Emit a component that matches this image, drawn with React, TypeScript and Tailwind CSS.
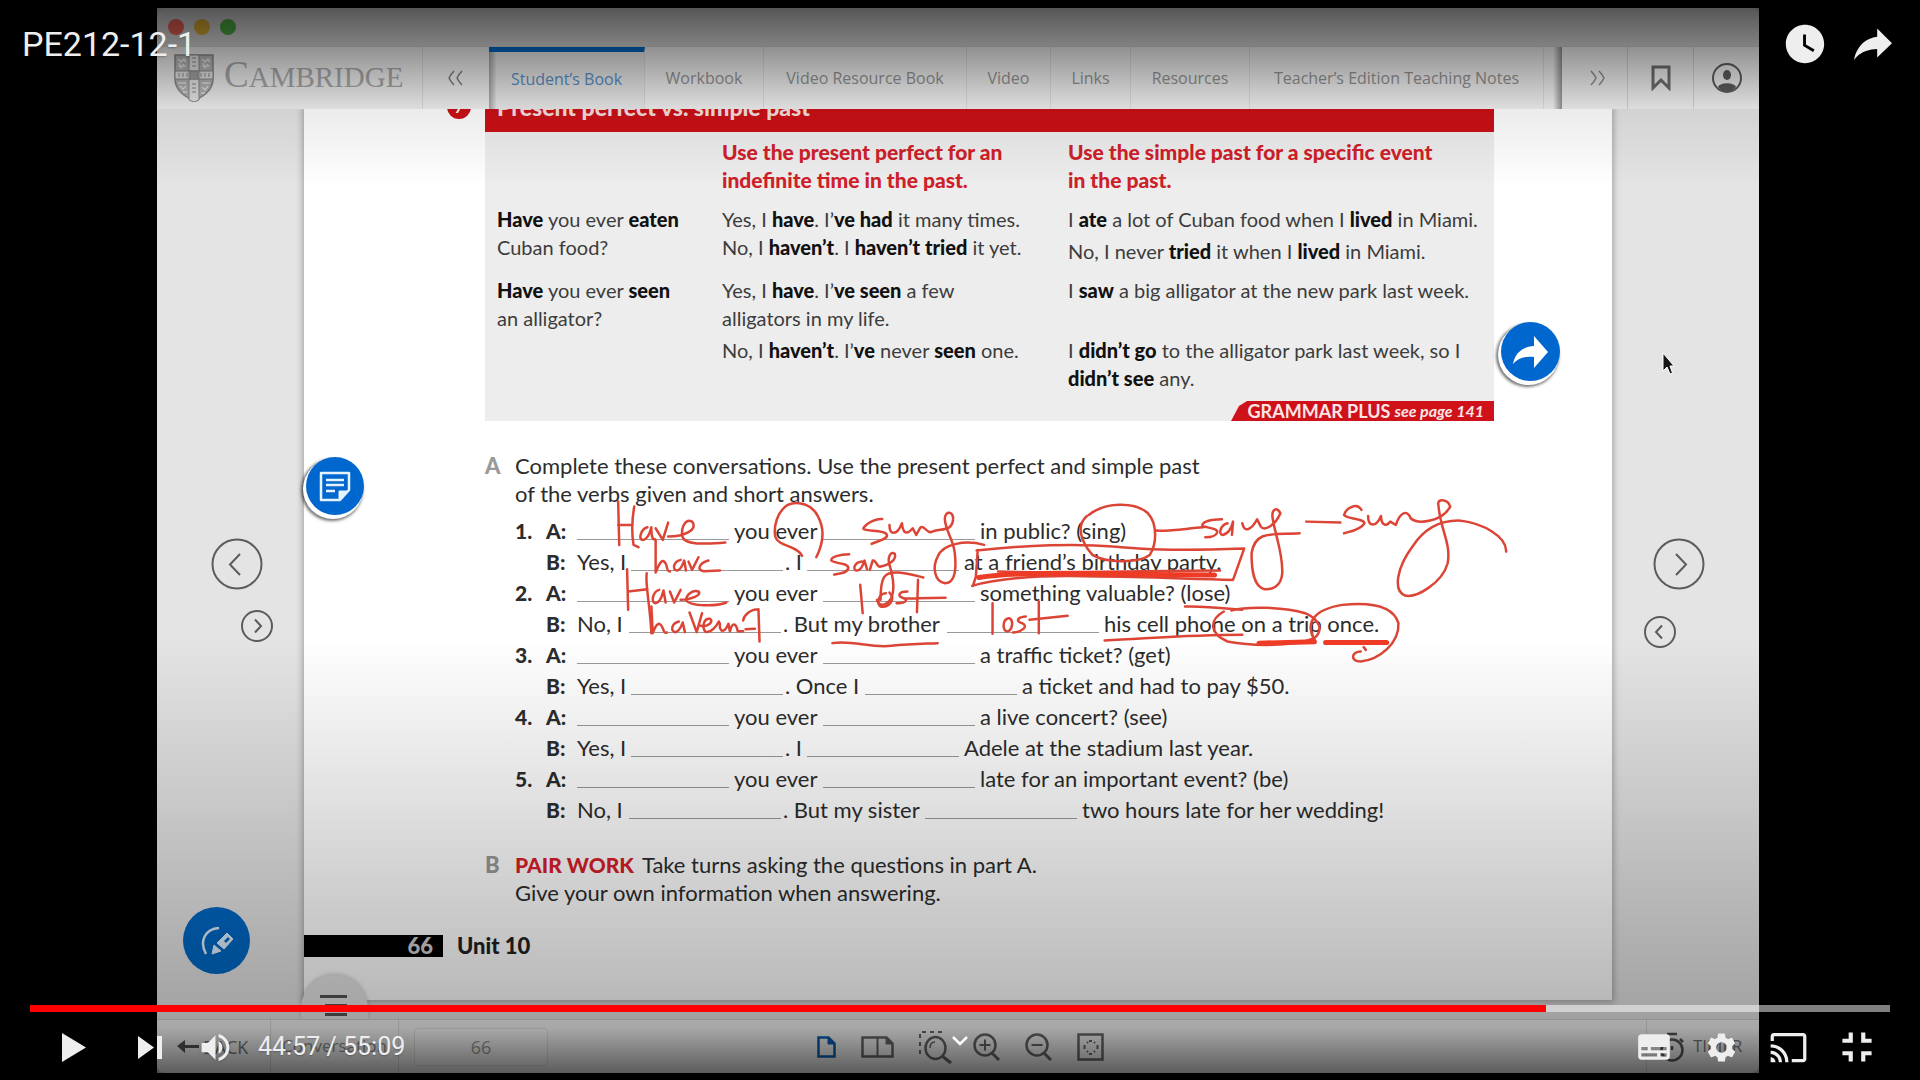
import React from "react";
import {
  MdCast,
  MdFullscreenExit,
  MdSettings,
  MdSubtitles,
  MdVolumeUp,
  MdWatchLater,
} from "react-icons/md";

const tabs = [
  { label: "Workbook", width: "w-[119px]" },
  { label: "Video Resource Book", width: "w-[203px]" },
  { label: "Video", width: "w-[84px]" },
  { label: "Links", width: "w-20" },
  { label: "Resources", width: "w-[119px]" },
  { label: "Teacher’s Edition Teaching Notes", width: "w-[294px]" },
];

type Part = { text?: string; width?: string };
type Line = { number?: string; speaker: string; parts: Part[] };

const blank: Part = {};

const lines: Line[] = [
  { number: "1.", speaker: "A:", parts: [blank, { text: "you ever", width: "w-[94px]" }, blank, { text: "in public? (sing)" }] },
  { speaker: "B:", parts: [{ text: "Yes, I", width: "w-[54px]" }, blank, { text: ". I", width: "w-[24px]" }, blank, { text: "at a friend’s birthday party." }] },
  { number: "2.", speaker: "A:", parts: [blank, { text: "you ever", width: "w-[94px]" }, blank, { text: "something valuable? (lose)" }] },
  { speaker: "B:", parts: [{ text: "No, I", width: "w-[52px]" }, blank, { text: ". But my brother", width: "w-[166px]" }, blank, { text: "his cell phone on a trip once." }] },
  { number: "3.", speaker: "A:", parts: [blank, { text: "you ever", width: "w-[94px]" }, blank, { text: "a traffic ticket? (get)" }] },
  { speaker: "B:", parts: [{ text: "Yes, I", width: "w-[54px]" }, blank, { text: ". Once I", width: "w-[82px]" }, blank, { text: "a ticket and had to pay $50." }] },
  { number: "4.", speaker: "A:", parts: [blank, { text: "you ever", width: "w-[94px]" }, blank, { text: "a live concert? (see)" }] },
  { speaker: "B:", parts: [{ text: "Yes, I", width: "w-[54px]" }, blank, { text: ". I", width: "w-[24px]" }, blank, { text: "Adele at the stadium last year." }] },
  { number: "5.", speaker: "A:", parts: [blank, { text: "you ever", width: "w-[94px]" }, blank, { text: "late for an important event? (be)" }] },
  { speaker: "B:", parts: [{ text: "No, I", width: "w-[52px]" }, blank, { text: ". But my sister", width: "w-[144px]" }, blank, { text: "two hours late for her wedding!" }] },
];

function TitleBar() {
  return (
    <div className="flex h-[38px] shrink-0 items-center gap-[10px] rounded-t-lg bg-[#d8d8d8] pl-[11px]">
      <span className="size-4 rounded-full bg-[#f0625a]" />
      <span className="size-4 rounded-full bg-[#dfae35]" />
      <span className="size-4 rounded-full bg-[#4fae42]" />
    </div>
  );
}

function Shield() {
  return (
    <svg className="h-12 w-10 shrink-0" viewBox="0 0 40 48" fill="none" stroke="#8b8b8b">
      <path d="M1 1h38v24c0 11-9 17-19 22C10 42 1 36 1 25z" fill="#b5b5b5" strokeWidth="1.5" />
      <path d="M15 1h10v45l-5 2-5-2zM1 17h38v8H1z" fill="#e6e6e6" strokeWidth="1" />
      <rect x="16" y="17" width="8" height="8" fill="#a5a5a5" />
      <path d="M4 5l3 3 3-3 2 3M4 12h8M5 9l2 5 3-4M28 5l3 3 3-3 2 3M28 12h8M29 9l2 5 3-4M4 29h8M6 32l3 3 3-3M9 38h4M28 29h8M28 33l3 3 3-4M27 39h4" stroke="#e2e2e2" strokeWidth="1.5" />
      <path d="M5 19v4M9 19v4M13 19v4M27 19v4M31 19v4M35 19v4M18 4h4M18 8h4M18 12h4M18 30h4M18 34h4M18 38h4" strokeWidth="1" />
    </svg>
  );
}

function Nav() {
  return (
    <nav className="flex h-[63px] shrink-0 border-t border-[#cfcfcf] bg-[#efefef] font-['Open_Sans',sans-serif] text-base text-[#929292]">
      <a href="#home" className="flex w-[266px] shrink-0 items-center gap-[10px] border-r border-[#d9d9d9] pl-[17px] text-[#a8a8a8]">
        <Shield />
        <span className="pb-1 font-['Liberation_Serif',serif] text-[29px] leading-8">
          <span className="text-[37px]">C</span>AMBRIDGE
        </span>
      </a>
      <button aria-label="Scroll tabs left" className="flex w-[66px] shrink-0 items-center justify-center">
        <svg className="h-4 w-4" viewBox="0 0 16 16" fill="none" stroke="#7b7b7b" strokeWidth="1.5">
          <path d="M6 1Q3 4 1 8Q3 12 6 15M14 1Q11 4 9 8Q11 12 14 15" />
        </svg>
      </button>
      <button className="flex w-[156px] shrink-0 items-center justify-center border-t-[5px] border-r border-t-[#0069c8] border-r-[#dcdcdc] bg-gradient-to-r from-[#a4a4a4] to-[#e9e9e9] to-5% pb-1 text-[#5a8fc6]">
        Student’s Book
      </button>
      {tabs.map((t) => (
        <button key={t.label} className={`${t.width} shrink-0 border-r border-[#dcdcdc] whitespace-nowrap`}>
          {t.label}
        </button>
      ))}
      <div className="min-w-0 flex-1 bg-gradient-to-r from-[#efefef] from-50% to-[#909090]" />
      <button aria-label="Scroll tabs right" className="flex w-[66px] shrink-0 items-center justify-center border-r border-[#d2d2d2] pl-1">
        <svg className="h-4 w-4" viewBox="0 0 16 16" fill="none" stroke="#8b8b8b" strokeWidth="1.5">
          <path d="M2 1Q5 4 7 8Q5 12 2 15M10 1Q13 4 15 8Q13 12 10 15" />
        </svg>
      </button>
      <button aria-label="Bookmark" className="flex w-[66px] shrink-0 items-center justify-center border-r border-[#d2d2d2]">
        <svg className="h-[26px] w-5" viewBox="0 0 20 26" fill="none" stroke="#6e6e6e" strokeWidth="3">
          <path d="M2 2h16v21l-8-8-8 8z" />
        </svg>
      </button>
      <button aria-label="Account" className="flex w-[65px] shrink-0 items-center justify-center">
        <svg className="size-8" viewBox="0 0 32 32" fill="none" stroke="#5c5c5c">
          <circle cx="16" cy="16" r="14" strokeWidth="2" />
          <ellipse cx="16" cy="13" rx="4" ry="5" fill="#5c5c5c" stroke="none" />
          <path d="M7 25c2-5 16-5 18 0-4 6-14 6-18 0z" fill="#5c5c5c" stroke="none" />
        </svg>
      </button>
    </nav>
  );
}

function GrammarTable() {
  return (
    <section className="relative ml-[181px] h-[312px] w-[1009px] bg-[#ededed]">
      <span className="absolute -top-[14px] -left-[38px] flex size-6 items-center justify-center rounded-full bg-[#cb1016] font-bold text-white">
        7
      </span>
      <div className="h-[23px] bg-[#cb1016]">
        <h2 className="relative -top-4 inline-block px-3 text-[23px] leading-7 font-black text-[#f6dede]">
          Present perfect vs. simple past
        </h2>
      </div>
      <table className="mt-[6px] ml-3 table-fixed text-left text-[20px] leading-7 text-[#3c3c3c] [&_b]:font-black [&_b]:text-[#111]">
        <colgroup>
          <col className="w-[225px]" />
          <col className="w-[346px]" />
          <col className="w-[426px]" />
        </colgroup>
        <thead>
          <tr className="align-top text-[21px] font-bold text-[#cf2029]">
            <td className="pb-[11px]" />
            <th scope="col" className="pb-[11px] font-black">Use the present perfect for an<br />indefinite time in the past.</th>
            <th scope="col" className="pb-[11px] font-black">Use the simple past for a specific event<br />in the past.</th>
          </tr>
        </thead>
        <tbody>
          <tr className="align-top">
            <td><b>Have</b> you ever <b>eaten</b><br />Cuban food?</td>
            <td>Yes, I <b>have</b>. I’<b>ve had</b> it many times.<br />No, I <b>haven’t</b>. I <b>haven’t tried</b> it yet.</td>
            <td className="pb-[11px]">
              <p className="pb-1">I <b>ate</b> a lot of Cuban food when I <b>lived</b> in Miami.</p>
              <p>No, I never <b>tried</b> it when I <b>lived</b> in Miami.</p>
            </td>
          </tr>
          <tr className="align-top">
            <td><b>Have</b> you ever <b>seen</b><br />an alligator?</td>
            <td className="pb-1">Yes, I <b>have</b>. I’<b>ve seen</b> a few<br />alligators in my life.</td>
            <td>I <b>saw</b> a big alligator at the new park last week.</td>
          </tr>
          <tr className="align-top">
            <td />
            <td>No, I <b>haven’t</b>. I’<b>ve</b> never <b>seen</b> one.</td>
            <td>I <b>didn’t go</b> to the alligator park last week, so I<br /><b>didn’t see</b> any.</td>
          </tr>
        </tbody>
      </table>
      <a href="#page-141" className="absolute right-0 bottom-0 flex h-5 w-[263px] items-center justify-end gap-1 rounded-tl-2xl bg-[#cf1219] pr-[10px] text-lg leading-5 font-bold text-[#fae6e6] [clip-path:polygon(0_100%,8px_5px,16px_0,100%_0,100%_100%)]">
        GRAMMAR PLUS <i className="text-base">see page 141</i>
      </a>
    </section>
  );
}

function partPadding(index: number, text: string) {
  if (index === 0) return "";
  return text.startsWith(".") ? "pl-[2px]" : "pl-[5px]";
}

function Exercises() {
  return (
    <section className="ml-[181px] pt-[31px] text-[22px] text-[#2c2c2c]">
      <div className="flex leading-7">
        <h3 className="w-[30px] text-[22px] font-black text-[#999]">A</h3>
        <p>
          Complete these conversations. Use the present perfect and simple past
          <br />
          of the verbs given and short answers.
        </p>
      </div>
      <ol className="mt-[7px] ml-[30px] leading-[31px]">
        {lines.map((l, i) => (
          <li key={i} className="flex whitespace-nowrap">
            <span className="w-[31px] text-[21px] font-black">{l.number}</span>
            <span className="w-[31px] text-[21px] font-black">{l.speaker}</span>
            {l.parts.map((p, j) =>
              p.text ? (
                <span key={j} className={`${p.width ?? ""} ${partPadding(j, p.text)} shrink-0`}>{p.text}</span>
              ) : (
                <span key={j} className="mb-[6px] w-[152px] shrink-0 border-b border-[#999]" />
              ),
            )}
          </li>
        ))}
      </ol>
      <div className="mt-[26px] flex leading-7">
        <h3 className="w-[30px] text-[22px] font-black text-[#999]">B</h3>
        <p>
          <strong className="mr-2 text-[21px] font-black text-[#d81f2b]">PAIR WORK</strong>
          Take turns asking the questions in part A.
          <br />
          Give your own information when answering.
        </p>
      </div>
    </section>
  );
}

const inkLeft = [
  "M415 185L418 315M415 255L455 255M460 200Q450 260 458 315L472 322",
  "M497 262C478 268 470 300 485 300C497 298 505 275 508 262C508 285 510 300 518 298M520 265L540 300L555 248",
  "M555 290C600 290 640 270 622 245C605 235 590 260 595 290C600 320 680 310 715 308",
  "M970 352C990 310 995 270 975 230C960 195 920 180 890 195C860 215 850 260 855 290C862 320 915 315 930 348",
  "M1155 237C1130 235 1100 260 1102 267C1110 275 1165 270 1168 285C1170 300 1135 305 1125 312",
  "M1175 255C1175 285 1195 290 1210 250C1212 275 1220 290 1240 265L1250 285L1262 262C1275 255 1280 285 1295 275C1320 265 1350 275 1353 240C1355 215 1332 210 1330 235C1330 270 1355 300 1358 340C1362 380 1362 430 1330 430C1300 425 1295 380 1310 350C1325 310 1390 300 1440 315",
  "M520 300L520 398C530 370 540 350 550 375C552 390 555 395 560 395",
  "M590 360C570 365 565 390 580 392C592 390 597 370 600 362L605 392M612 365L622 390L640 352M668 362C640 370 635 392 655 394L700 392",
  "M1062 343C1035 343 1010 352 1012 362C1020 372 1060 368 1060 385C1055 400 1035 402 1020 404",
  "M1098 365C1075 368 1070 392 1085 392C1098 390 1102 370 1105 362L1112 388M1120 390L1128 362C1138 358 1140 385 1150 380C1175 375 1195 360 1190 342C1180 332 1168 350 1175 375C1185 410 1190 450 1180 475C1165 500 1145 500 1140 480M1150 480C1150 410 1160 395 1200 398C1230 400 1250 408 1270 413",
  "M440 388L443 510M443 455L497 448M495 400C490 430 505 500 508 580",
  "M530 450C512 455 505 490 520 490C535 488 540 460 542 452L548 488M560 455L572 488L590 450M590 480C620 480 650 465 640 455C625 448 605 465 605 482C620 500 690 500 718 488",
  "M508 500L512 580C520 555 530 540 540 565C543 578 546 580 552 578M585 545C565 550 560 575 575 577C588 575 593 555 596 548L602 577M615 518L635 577L650 520",
  "M645 558C665 563 685 545 672 537C655 535 648 562 660 576C675 580 690 560 697 545M700 550C698 578 712 582 724 552L728 575C735 545 745 550 750 574L765 574M765 542C768 525 785 508 808 508M772 568L798 567M808 508L811 605",
  "M1093 435L1100 520M1165 460C1145 460 1138 490 1150 500C1170 505 1195 480 1175 458M1225 455C1200 455 1195 470 1215 475C1230 482 1215 492 1195 490M1255 420L1252 517M1215 476L1332 474",
  "M1015 610C1070 600 1120 625 1180 618C1230 612 1260 612 1310 610",
];

const inkRight = [
  "M375 105C420 65 500 65 535 100C560 130 560 190 540 225C510 250 420 250 385 225C350 180 342 135 370 108",
  "M555 152C600 155 640 145 685 142M735 118C705 118 680 125 682 138C700 145 725 145 722 158C718 170 700 172 690 172",
  "M750 130C730 135 725 165 737 165C755 160 762 140 765 125L762 165M790 130C795 160 815 150 830 118L840 140C850 155 880 135 893 100C885 80 868 85 872 115C880 170 900 220 898 280C895 320 870 330 850 328C820 320 815 270 815 220C825 150 870 165 945 160",
  "M963 125L1055 128M1112 90C1100 65 1070 85 1065 105C1075 118 1120 115 1120 130C1110 150 1080 155 1065 160",
  "M1130 108C1130 140 1150 145 1165 108C1165 130 1175 145 1190 125L1205 135C1215 100 1235 85 1245 115C1265 135 1330 125 1352 80C1345 55 1315 55 1320 75C1325 150 1355 190 1345 250C1330 310 1260 355 1230 347C1195 330 1210 260 1250 200C1285 140 1330 120 1380 122C1440 130 1505 170 1503 215",
  "M75 210L70 290L62 318M72 212C200 195 350 190 440 200C500 205 560 215 795 206L765 300C600 295 500 290 400 290C250 285 130 295 60 318",
  "M130 275C300 282 500 272 730 272",
  "M635 380C690 378 740 385 790 390M740 395C700 420 700 460 750 485C820 500 930 500 985 475C1010 450 1000 420 960 400C900 380 800 380 760 392",
  "M985 480C960 430 980 390 1060 375C1150 365 1200 385 1212 430C1215 490 1160 540 1110 545C1080 545 1085 515 1110 515M1118 502L1124 510",
  "M418 482C550 475 650 465 790 465",
  "M115 370L115 462M158 415C140 420 142 455 155 455C170 450 172 420 160 415M205 410C180 412 178 425 195 430C215 440 190 458 170 458M240 365L240 460M215 420L318 408",
];

const inkThick = ["M78 293C200 270 450 285 715 285", "M835 490L985 486M1015 488L1180 488"];

function Handwriting() {
  return (
    <svg
      className="pointer-events-none absolute top-0 left-0 h-[891px] w-[1308px]"
      viewBox="304 109 1308 891"
      fill="none"
      stroke="#dc4536"
      strokeWidth="2.5"
      strokeLinecap="round"
      strokeLinejoin="round"
    >
      <g transform="translate(470 440) scale(0.357 0.333)">
        {inkLeft.map((d) => <path key={d} d={d} vectorEffect="non-scaling-stroke" />)}
      </g>
      <g transform="translate(950 480) scale(0.37 0.333)">
        {inkRight.map((d) => <path key={d} d={d} vectorEffect="non-scaling-stroke" />)}
        {inkThick.map((d) => <path key={d} d={d} strokeWidth="5" stroke="#ee3b26" vectorEffect="non-scaling-stroke" />)}
      </g>
    </svg>
  );
}

function RoundArrow({ label, dir, big }: { label: string; dir: "left" | "right"; big?: boolean }) {
  return (
    <button aria-label={label} className={big ? "size-[52px]" : "size-8"}>
      <svg className="size-full" viewBox={big ? "0 0 52 52" : "0 0 32 32"} fill="none" stroke="#5c5c5c" strokeWidth="2">
        {big ? (
          <>
            <circle cx="26" cy="26" r="24.5" />
            <path d={dir === "left" ? "M29 16L19 26.500L29 37" : "M23 16L33 26.500L23 37"} />
          </>
        ) : (
          <>
            <circle cx="16" cy="16" r="15" />
            <path d={dir === "left" ? "M18 9.500L12 16L18 22.500" : "M14 9.500L20 16L14 22.500"} />
          </>
        )}
      </svg>
    </button>
  );
}

function BookPage() {
  return (
    <article className="relative h-[891px] min-w-0 flex-1 bg-white font-[Lato,sans-serif] shadow-[0_0_6px_2px_rgba(0,0,0,0.25)]">
      <GrammarTable />
      <Exercises />
      <footer className="mt-[28px] flex items-center text-[22px] leading-[22px] font-black text-[#222]">
        <span className="w-[139px] bg-black pr-[10px] text-right text-[#d0d0d0]">66</span>
        <span className="ml-[14px]">Unit 10</span>
      </footer>
      <Handwriting />
      <button aria-label="Note" className="absolute top-[348px] left-[2px] flex size-[58px] items-center justify-center rounded-full bg-[#0067cf] shadow-[-2px_3px_0_1px_#fff,-3px_4px_3px_2px_rgba(0,0,0,0.55)]">
        <svg className="size-8" viewBox="0 0 32 32" fill="none" stroke="#e4f3ff" strokeWidth="2.500">
          <path d="M2 3h28v17l-9 10H2z" strokeLinejoin="round" />
          <path d="M7 10h18M7 15h18M7 21h9" />
          <path d="M20 30V21h10z" fill="#e4f3ff" strokeWidth="1" />
        </svg>
      </button>
      <button aria-label="Open activity" className="absolute top-[213px] right-[52px] flex size-[59px] items-center justify-center rounded-full bg-[#0067cf] shadow-[-2px_3px_0_1px_#fff,-3px_4px_3px_2px_rgba(0,0,0,0.55)]">
        <svg className="h-8 w-[35px]" viewBox="0 0 35 32" fill="#fff">
          <path d="M21 0l14 16-14 16V21C12 20 5 22 0 28 2 17 9 11 21 10z" />
        </svg>
      </button>
    </article>
  );
}

function Reader() {
  return (
    <main className="relative flex min-h-0 flex-1 overflow-hidden bg-[#e4e4e4]">
      <div className="relative flex w-[147px] shrink-0 flex-col pt-[429px] pr-[31px] pl-[54px]">
        <RoundArrow label="Previous page" dir="left" big />
        <div className="mt-5 flex justify-end">
          <RoundArrow label="Show side panel" dir="right" />
        </div>
        <button aria-label="Annotation tools" className="mt-[265px] -ml-7 flex size-[67px] shrink-0 items-center justify-center rounded-full bg-[#0068c4]">
          <svg className="size-[34px]" viewBox="0 0 34 34" fill="none" stroke="#dcefff" strokeWidth="2.500">
            <path d="M19 4C5 5-1 17 6 30" />
            <path d="M12 30l2-9 7 6z" fill="#dcefff" strokeWidth="1" />
            <path d="M17 19L27 9l6 6-9 10z" fill="#dcefff" strokeWidth="1" />
            <path d="M24 17l4-4 2 2-4 4z" fill="#0068c4" stroke="none" />
          </svg>
        </button>
      </div>
      <BookPage />
      <div className="flex w-[147px] shrink-0 flex-col items-start gap-5 pt-[429px] pl-[32px]">
        <span className="pl-[9px]"><RoundArrow label="Next page" dir="right" big /></span>
        <RoundArrow label="Hide side panel" dir="left" />
      </div>
      <svg className="absolute top-[243px] right-[85px] h-6 w-3" viewBox="0 0 12 24" fill="#151515" stroke="#fff" strokeWidth="1">
        <path d="M1 1v18l4-4 3 7 2.500-1L8 14h4z" />
      </svg>
      <div className="absolute bottom-0 left-[144px] flex h-11 w-[67px] flex-col items-end gap-[6px] rounded-t-[34px] bg-[#e6e6e6] pt-5 pr-[21px] shadow-[0_-1px_4px_rgba(0,0,0,0.2)]">
        <span className="h-[3px] w-[27px] bg-[#555]" />
        <span className="h-[3px] w-[22px] bg-[#555]" />
        <span className="h-[3px] w-[22px] bg-[#555]" />
      </div>
    </main>
  );
}

function ToolBar() {
  return (
    <div className="flex h-[54px] shrink-0 rounded-b-lg border-t border-[#cfcfcf] bg-[#f2f2f2] font-['Open_Sans',sans-serif] text-lg text-[#8a8a8a]">
      <div className="flex flex-1 items-center">
        <button className="flex h-full w-[114px] items-center gap-1 border-r border-[#d8d8d8] pl-5 text-[#777]">
          <svg className="h-4 w-[22px]" viewBox="0 0 22 16" fill="#555">
            <path d="M0 7L8 1v5h14v3H8v5z" />
          </svg>
          BACK
        </button>
        <button className="h-full w-[128px] border-r border-[#d8d8d8] text-[17px]">Conversation</button>
        <input aria-label="Page number" defaultValue="66" className="ml-[15px] h-[38px] w-[134px] rounded border border-[#dedede] bg-[#f5f5f5] text-center text-[#999]" />
      </div>
      <div className="flex items-center gap-[25px] pl-1">
        <button aria-label="Single page">
          <svg className="h-[22px] w-[19px]" viewBox="0 0 19 22" fill="none" stroke="#0a5fae" strokeWidth="2.500">
            <path d="M1.500 1.500h10l6 6v13h-16z" /><path d="M11 1v7h7z" fill="#0a5fae" strokeWidth="1" />
          </svg>
        </button>
        <button aria-label="Double page">
          <svg className="h-[22px] w-[33px]" viewBox="0 0 33 22" fill="none" stroke="#666" strokeWidth="2.500">
            <path d="M1.500 1.500h24l6 6v13h-30z" /><path d="M16.500 2v18" strokeWidth="2" /><path d="M25 1v7h7z" fill="#666" strokeWidth="1" />
          </svg>
        </button>
        <button aria-label="Zoom to area">
          <svg className="h-[34px] w-[33px]" viewBox="0 0 33 34" fill="none" stroke="#666" strokeWidth="2.500">
            <path d="M1 24V2h21v4" strokeDasharray="4 4" strokeWidth="2" />
            <ellipse cx="16.500" cy="18" rx="10" ry="11" /><path d="M23 26l9 7" strokeWidth="3" /><path d="M11 18c0-4 2-6 5-6" strokeWidth="1.500" />
          </svg>
        </button>
        <button aria-label="Zoom in" className="-ml-1">
          <svg className="h-7 w-[27px]" viewBox="0 0 27 28" fill="none" stroke="#666" strokeWidth="2.500">
            <circle cx="12" cy="12" r="10.500" /><path d="M19 20l7 7" strokeWidth="3" /><path d="M6.500 12h11M12 6.500v11" strokeWidth="2" />
          </svg>
        </button>
        <button aria-label="Zoom out">
          <svg className="h-7 w-[27px]" viewBox="0 0 27 28" fill="none" stroke="#666" strokeWidth="2.500">
            <circle cx="12" cy="12" r="10.500" /><path d="M19 20l7 7" strokeWidth="3" /><path d="M6.500 12h11" strokeWidth="2" />
          </svg>
        </button>
        <button aria-label="Fit page">
          <svg className="h-7 w-[27px]" viewBox="0 0 27 28" fill="none" stroke="#666" strokeWidth="2.500">
            <path d="M1.500 1.500h24v25h-24z" /><path d="M12 8h3M12 21h3M7.500 12v4M20.500 12v4M10 10l1-1M17 9l1 1M10 18l1 1M17 19l1-1" strokeWidth="2" />
          </svg>
        </button>
      </div>
      <div className="flex flex-1 justify-end">
        <button className="flex w-[113px] items-center gap-2 border-l border-[#d8d8d8] pl-3 text-[17px] text-[#777]">
          <svg className="h-[30px] w-[26px] shrink-0" viewBox="0 0 26 30" fill="none" stroke="#555" strokeWidth="2.500">
            <circle cx="13" cy="18" r="10.500" /><path d="M8 2h10M21 7l3 3M13 18v-4" />
          </svg>
          TIMER
        </button>
      </div>
    </div>
  );
}

function PlayerControls({ played }: { played: number }) {
  return (
    <div className="absolute inset-x-0 bottom-[6px] text-[#eee]">
      <div className="flex px-[30px] pb-2">
        <input
          type="range"
          aria-label="Seek"
          min={0}
          max={100}
          step={0.1}
          defaultValue={played}
          className="h-[7px] w-full appearance-none bg-white/50 [&::-webkit-slider-thumb]:size-0 [&::-webkit-slider-thumb]:appearance-none"
          style={{ backgroundImage: `linear-gradient(to right, #ff0000 ${played}%, transparent ${played}%)` }}
        />
      </div>
      <div className="grid h-[54px] grid-cols-[1fr_auto_1fr] items-center px-[38px]">
        <div className="flex items-center pl-6">
          <button aria-label="Play">
            <svg className="h-[29px] w-6" viewBox="0 0 24 29" fill="currentColor"><path d="M0 0v29l24-14.500z" /></svg>
          </button>
          <button aria-label="Next" className="ml-[52px]">
            <svg className="h-[23px] w-6" viewBox="0 0 24 23" fill="currentColor"><path d="M0 0v23l16-11.500zM19 0h5v23h-5z" /></svg>
          </button>
          <button aria-label="Mute" className="ml-[35px] drop-shadow"><MdVolumeUp size={37} /></button>
          <span className="ml-6 font-[Roboto,sans-serif] text-[25px] leading-7 text-shadow-sm">44:57 / 55:09</span>
        </div>
        <button aria-label="More videos" className="mb-3">
          <svg className="h-[10px] w-4" viewBox="0 0 16 10" fill="none" stroke="#fff" strokeWidth="2.500"><path d="M1 1l7 7 7-7" /></svg>
        </button>
        <div className="flex items-center justify-end">
          <button aria-label="Subtitles"><MdSubtitles size={38} /></button>
          <button aria-label="Settings" className="ml-[31px]"><MdSettings size={35} /></button>
          <button aria-label="Cast" className="ml-[30px]"><MdCast size={39} /></button>
          <button aria-label="Exit full screen" className="ml-6"><MdFullscreenExit size={50} /></button>
        </div>
      </div>
    </div>
  );
}

export default function App() {
  return (
    <div className="relative h-screen overflow-hidden bg-black">
      <div className="h-full pt-2 pr-[161px] pb-[7px] pl-[157px]">
        <div className="relative flex h-full flex-col overflow-hidden bg-[#c8c8c8]">
          <TitleBar />
          <Nav />
          <Reader />
          <ToolBar />
          <div className="pointer-events-none absolute inset-x-0 top-0 h-[180px] bg-[linear-gradient(to_bottom,rgba(0,0,0,0.6)_0px,rgba(0,0,0,0.4)_38px,rgba(0,0,0,0.08)_100px,rgba(0,0,0,0)_180px)]" />
          <div className="pointer-events-none absolute inset-x-0 bottom-0 h-[435px] bg-[linear-gradient(to_bottom,rgba(0,0,0,0)_0px,rgba(0,0,0,0.15)_200px,rgba(0,0,0,0.28)_365px,rgba(0,0,0,0.31)_390px,rgba(0,0,0,0.62)_435px)]" />
        </div>
      </div>
      <header className="absolute inset-x-0 top-[21px] flex h-[46px] items-center justify-between pr-7 pl-[22px] text-[#eee]">
        <h1 className="font-[Roboto,sans-serif] text-[34px] leading-[46px] text-shadow-sm">PE212-12-1</h1>
        <div className="flex items-center gap-[26px]">
          <button aria-label="Watch later"><MdWatchLater size={46} /></button>
          <button aria-label="Share">
            <svg className="h-8 w-[38px]" viewBox="8 9.700 20 16.500" fill="currentColor">
              <path d="m20.200 14.190 0-4.450 7.790 7.790-7.790 7.560 0-4.560C16.270 20.690 12.100 21.810 9.340 24.760 8.800 25.130 7.600 27.290 8.120 25.650 9.080 21.320 11.800 17.180 15.980 15.380c1.330-.6 2.760-.98 4.210-1.190z" />
            </svg>
          </button>
        </div>
      </header>
      <PlayerControls played={81.5} />
    </div>
  );
}
